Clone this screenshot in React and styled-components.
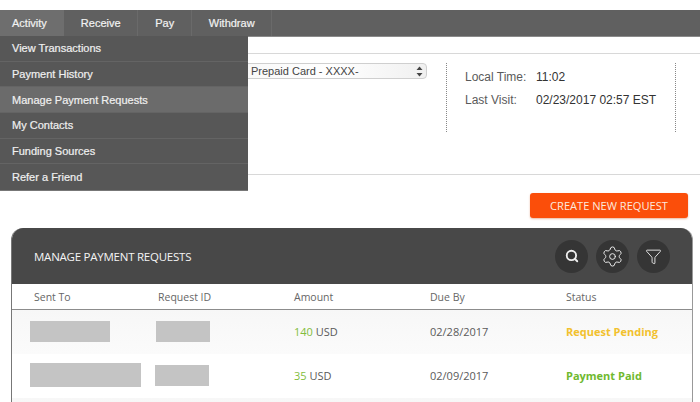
import styled, { createGlobalStyle } from "styled-components";
import { Search, Settings, Filter } from "lucide-react";

const tabs = ["Activity", "Receive", "Pay", "Withdraw"];
const menuItems = [
  "View Transactions",
  "Payment History",
  "Manage Payment Requests",
  "My Contacts",
  "Funding Sources",
  "Refer a Friend",
];
const rows = [
  {
    sentWidth: 80,
    sentHeight: 21,
    sentShift: -4,
    idWidth: 54,
    idHeight: 21,
    idShift: -2,
    amount: 140,
    due: "02/28/2017",
    status: "Request Pending",
    color: "#f2c12e",
  },
  {
    sentWidth: 111,
    sentHeight: 24,
    sentShift: -4,
    idWidth: 54,
    idHeight: 21,
    idShift: -3,
    amount: 35,
    due: "02/09/2017",
    status: "Payment Paid",
    color: "#6fb92f",
  },
];

function App() {
  return (
    <Page>
      <GlobalStyle />
      <NavBar>
        {tabs.map((tab, index) => (
          <NavTab key={tab} $active={index === 0}>
            {tab}
          </NavTab>
        ))}
        <Dropdown>
          {menuItems.map((item) => (
            <DropdownItem key={item} $active={item === "Manage Payment Requests"}>
              {item}
            </DropdownItem>
          ))}
        </Dropdown>
      </NavBar>
      <InfoSection>
        <SelectColumn>
          <CardSelect>
            <span>Prepaid Card - XXXX-</span>
            <svg width="7" height="11" viewBox="0 0 7 11">
              <path d="M3.5 0.5 L6.5 4 L0.5 4 Z" fill="#444" />
              <path d="M3.5 10.5 L6.5 7 L0.5 7 Z" fill="#444" />
            </svg>
          </CardSelect>
        </SelectColumn>
        <VisitColumn>
          <VisitRow>
            <VisitLabel>Local Time:</VisitLabel>
            <VisitValue>11:02</VisitValue>
          </VisitRow>
          <VisitRow>
            <VisitLabel>Last Visit:</VisitLabel>
            <VisitValue>02/23/2017 02:57 EST</VisitValue>
          </VisitRow>
        </VisitColumn>
      </InfoSection>
      <ActionRow>
        <CreateButton>CREATE NEW REQUEST</CreateButton>
      </ActionRow>
      <Panel>
        <PanelHeader>
          <PanelTitle>MANAGE PAYMENT REQUESTS</PanelTitle>
          <PanelIcons>
            <RoundIcon>
              <Search size={14} strokeWidth={3.2} />
            </RoundIcon>
            <RoundIcon>
              <Settings size={23} strokeWidth={1} />
            </RoundIcon>
            <RoundIcon>
              <Filter size={17} strokeWidth={1.3} />
            </RoundIcon>
          </PanelIcons>
        </PanelHeader>
        <ColumnHeader>
          <span>Sent To</span>
          <span>Request ID</span>
          <span>Amount</span>
          <span>Due By</span>
          <span>Status</span>
        </ColumnHeader>
        {rows.map((row, index) => (
          <TableRow key={row.due} $odd={index % 2 === 0}>
            <Redacted $width={row.sentWidth} $height={row.sentHeight} $shift={row.sentShift} />
            <Redacted $width={row.idWidth} $height={row.idHeight} $shift={row.idShift} />
            <Amount>
              <b>{row.amount}</b> USD
            </Amount>
            <span>{row.due}</span>
            <Status $color={row.color}>{row.status}</Status>
          </TableRow>
        ))}
        <TableRow $odd />
      </Panel>
    </Page>
  );
}

export default App;

const GlobalStyle = createGlobalStyle`
  html, body {
    margin: 0;
    padding: 0;
    background: #fff;
    overflow: hidden;
  }
`;

const Page = styled.div`
  width: 700px;
  height: 402px;
  padding-top: 10px;
  box-sizing: border-box;
  overflow: hidden;
  font-family: "Liberation Sans", Arial, sans-serif;
`;

const NavBar = styled.div`
  position: relative;
  display: flex;
  height: 26px;
  background-color: #606060;
  border-bottom: 1px solid #8a8a8a;
`;

const NavTab = styled.div`
  display: flex;
  align-items: center;
  padding: 0 16.6px 0 17px;
  font-size: 11px;
  color: #f2f2f2;
  -webkit-text-stroke: 0.2px #f2f2f2;
  border-right: 1px solid #6a6a6a;
  background-color: ${(p) => (p.$active ? "#6e6e6e" : "transparent")};

  &:first-child {
    padding: 0 17px 0 12px;
    border-right: none;
  }
`;

const Dropdown = styled.div`
  position: absolute;
  top: 26px;
  left: 0;
  width: 248px;
  z-index: 10;
  background-color: #575757;
  border-bottom: 1px solid #777;
`;

const DropdownItem = styled.div`
  display: flex;
  align-items: center;
  height: 25.67px;
  box-sizing: border-box;
  padding-left: 12px;
  font-size: 11px;
  color: #f0f0f0;
  -webkit-text-stroke: 0.2px #f0f0f0;
  border-bottom: 1px solid #646464;
  background-color: ${(p) => (p.$active ? "#6b6b6b" : "#575757")};

  &:last-child {
    border-bottom: none;
  }
`;

const InfoSection = styled.div`
  display: flex;
  margin-top: 16px;
  height: 111px;
  padding-top: 9px;
  border-top: 1px solid #d8d8d8;
  border-bottom: 1px solid #d8d8d8;
`;

const SelectColumn = styled.div`
  display: flex;
  justify-content: flex-end;
  width: 446px;
  padding-right: 19px;
  box-sizing: border-box;
`;

const CardSelect = styled.div`
  display: flex;
  align-items: center;
  justify-content: space-between;
  width: 240px;
  height: 16px;
  padding: 0 3px 0 63px;
  box-sizing: border-box;
  font-size: 11px;
  color: #444;
  border: 1px solid #cfcfcf;
  border-radius: 4px;
  background: linear-gradient(to right, #f4f4f4, #fff 60%, #f0f0f0);
`;

const VisitColumn = styled.div`
  width: 230px;
  height: 69px;
  padding: 2px 0 0 18px;
  box-sizing: border-box;
  border-left: 1px dotted #888;
  border-right: 1px dotted #888;
`;

const VisitRow = styled.div`
  display: flex;
  align-items: center;
  height: 23.5px;
  font-size: 12px;
`;

const VisitLabel = styled.span`
  width: 71px;
  color: #5a5a5a;
`;

const VisitValue = styled.span`
  color: #333;
`;

const ActionRow = styled.div`
  display: flex;
  justify-content: flex-end;
  padding: 18px 12px 10px 0;
`;

const CreateButton = styled.div`
  display: flex;
  align-items: center;
  justify-content: center;
  width: 158px;
  height: 25px;
  font-family: "Open Sans", sans-serif;
  font-size: 11.1px;
  color: #fbe9df;
  background-color: #fb4e0a;
  border-radius: 3px;
  box-shadow: 0 1px 2px rgba(200, 80, 20, 0.4);
`;

const Panel = styled.div`
  width: 682px;
  margin-left: 11px;
  box-sizing: border-box;
  border-radius: 12px 12px 0 0;
  border-left: 1px solid #777;
  border-right: 1px solid #999;
  font-family: "Open Sans", sans-serif;
  overflow: hidden;
`;

const PanelHeader = styled.div`
  display: flex;
  align-items: center;
  justify-content: space-between;
  height: 56px;
  padding: 0 23px 0 23px;
  margin: 0 -1px;
  background-color: #484848;
`;

const PanelTitle = styled.div`
  font-size: 11.5px;
  letter-spacing: -0.24px;
  color: #f4f4f4;
`;

const PanelIcons = styled.div`
  display: flex;
  gap: 8px;
`;

const RoundIcon = styled.div`
  display: flex;
  align-items: center;
  justify-content: center;
  width: 33px;
  height: 33px;
  border-radius: 50%;
  color: #eee;
  background-color: #353535;
`;

const Grid = styled.div`
  display: grid;
  grid-template-columns: 124px 136px 136px 136px 1fr;
  align-items: center;
  padding-left: 22px;
`;

const ColumnHeader = styled(Grid)`
  height: 25px;
  font-size: 10.5px;
  color: #666;
  background-color: #fff;
  border-bottom: 1px solid #8c8c8c;
`;

const TableRow = styled(Grid)`
  height: 44px;
  box-sizing: border-box;
  padding-bottom: 2px;
  font-size: 11px;
  color: #5a5a5a;
  background: ${(p) => (p.$odd ? "linear-gradient(#f7f7f7, #fbfbfb)" : "#fff")};
`;

const Redacted = styled.div`
  width: ${(p) => p.$width}px;
  height: ${(p) => p.$height}px;
  margin-left: ${(p) => p.$shift}px;
  background-color: #c4c4c4;
`;

const Amount = styled.span`
  b {
    font-weight: 400;
    color: #82bd3c;
  }
`;

const Status = styled.span`
  font-weight: 700;
  color: ${(p) => p.$color};
`;
